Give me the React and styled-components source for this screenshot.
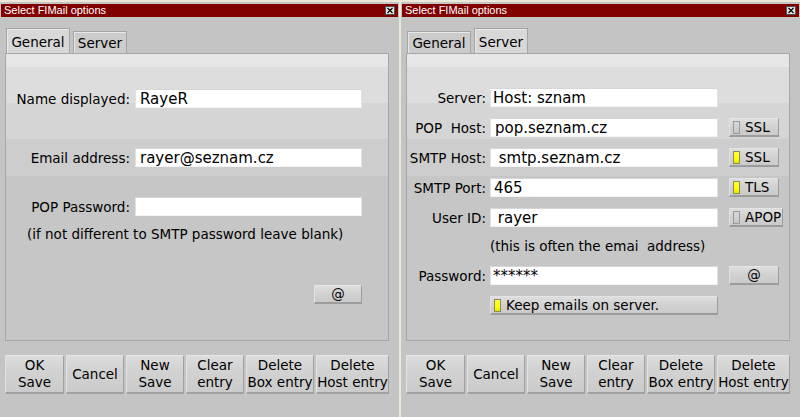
import React from "react";
import styled, { createGlobalStyle } from "styled-components";

const GlobalStyle = createGlobalStyle`
  html, body {
    margin: 0;
    padding: 0;
  }
  body {
    background: #ece9d8;
    font-family: "DejaVu Sans", Verdana, sans-serif;
    font-size: 13.5px;
    color: #000;
  }
`;

const Screen = styled.div`
  display: flex;
  gap: 2px;
  width: 800px;
  height: 417px;
  overflow: hidden;
`;

const Window = styled.div`
  box-sizing: border-box;
  width: ${p => p.width}px;
  height: 415px;
  margin-top: 2px;
  padding: 2px 1px 0;
  background: #c4c4c4;
  display: flex;
  flex-direction: column;
`;

const TitleBar = styled.div`
  height: 13px;
  background: #800000;
  display: flex;
  align-items: center;
  justify-content: space-between;
  padding: 0 3px;
`;

const TitleText = styled.span`
  font-family: "Liberation Sans", Arial, sans-serif;
  font-size: 11px;
  color: #fff;
  line-height: 13px;
`;

const CloseBox = styled.svg`
  display: block;
  flex: none;
`;

const Body = styled.div`
  padding: 11px 0 0 4px;
  display: flex;
  flex-direction: column;
`;

const TabRow = styled.div`
  display: flex;
  align-items: flex-end;
  gap: 3px;
  height: 25px;
  padding-left: 1px;
`;

const Tab = styled.div`
  box-sizing: border-box;
  width: ${p => p.width}px;
  height: ${p => (p.active ? 25 : 22)}px;
  border: 1px solid #a4a4a4;
  border-bottom: none;
  background: ${p => (p.active ? "#d8d8d8" : "#cbcbcb")};
  box-shadow: inset 1px 1px 0 #e8e8e8;
  display: flex;
  align-items: center;
  justify-content: center;
  padding-top: ${p => (p.active ? 2 : 0)}px;
`;

const Panel = styled.div`
  box-sizing: border-box;
  width: 384px;
  height: 288px;
  border: 1px solid #a6a6a6;
  background: linear-gradient(
    to bottom,
    #e6e6e6 0 13px,
    #dddddd 13px 49px,
    #d5d5d5 49px 85px,
    #cdcdcd 85px 122px,
    #c6c6c6 122px
  );
  display: flex;
  flex-direction: column;
`;

const Form = styled.div`
  display: flex;
  flex-direction: column;
  gap: ${p => p.gap || 0}px;
  padding-top: ${p => p.top || 0}px;
`;

const Field = styled.div`
  display: flex;
  align-items: center;
  height: 19px;
  margin-top: ${p => p.top || 0}px;
  padding-left: ${p => p.indent || 0}px;
`;

const Label = styled.span`
  flex: none;
  width: ${p => p.width}px;
  margin-right: ${p => p.gap}px;
  text-align: right;
  white-space: pre;
`;

const TextBox = styled.div`
  box-sizing: border-box;
  flex: none;
  width: ${p => p.width}px;
  height: 19px;
  background: #fff;
  border-top: 1px solid #d6d6d6;
  border-left: 1px solid #e2e2e2;
  border-right: 1px solid #e2e2e2;
  border-bottom: 1px solid #f4f4f4;
  padding-left: ${p => p.indent}px;
  font-size: 15px;
  line-height: 18px;
  white-space: pre;
  overflow: hidden;
`;

const Note = styled.div`
  height: 17px;
  line-height: 17px;
  margin-top: ${p => p.top || 0}px;
  padding-left: ${p => p.indent}px;
  white-space: pre;
`;

const SmallButton = styled.div`
  box-sizing: border-box;
  flex: none;
  width: ${p => p.width}px;
  height: 19px;
  margin-left: ${p => p.left || 0}px;
  border-top: 1px solid #e4e4e4;
  border-left: 1px solid #e0e0e0;
  border-right: 1px solid #9c9c9c;
  border-bottom: 2px solid #9c9c9c;
  background: linear-gradient(to bottom, #dedede, #d2d2d2 45%, #cacaca);
  display: flex;
  align-items: center;
  justify-content: ${p => (p.center ? "center" : "flex-start")};
  padding-left: ${p => (p.center ? 0 : 3)}px;
  line-height: 16px;
  white-space: nowrap;
`;

const Lamp = styled.span`
  box-sizing: border-box;
  flex: none;
  width: 7px;
  height: 13px;
  margin-right: 5px;
  border: 1px solid ${p => (p.on ? "#8a8a5a" : "#9a9a9a")};
  background: ${p =>
    p.on
      ? "linear-gradient(to bottom, #ffff40, #ffff00 60%, #e4e400)"
      : "linear-gradient(to bottom, #d8d8d8, #c6c6c6)"};
`;

const ButtonBar = styled.div`
  display: flex;
  gap: 2px;
  margin-top: 14px;
`;

const BarButton = styled.div`
  box-sizing: border-box;
  width: ${p => p.width}px;
  height: 39px;
  border-top: 1px solid #e6e6e6;
  border-left: 1px solid #e2e2e2;
  border-right: 1px solid #a0a0a0;
  border-bottom: 2px solid #a0a0a0;
  background: linear-gradient(to bottom, #dcdcdc, #d2d2d2 40%, #cbcbcb);
  display: flex;
  align-items: center;
  justify-content: center;
  text-align: center;
  line-height: 17px;
  white-space: pre-line;
`;

const barButtons = [
  { text: "OK\nSave", width: 59 },
  { text: "Cancel", width: 58 },
  { text: "New\nSave", width: 58 },
  { text: "Clear\nentry", width: 58 },
  { text: "Delete\nBox entry", width: 68 },
  { text: "Delete\nHost entry", width: 73 }
];

const Close = () => (
  <CloseBox width="10" height="9" viewBox="0 0 10 9">
    <rect x="0.5" y="0.5" width="9" height="8" fill="#e4e4e4" stroke="#505050" />
    <path d="M2.5 2 L7.5 7 M7.5 2 L2.5 7" stroke="#000" strokeWidth="1.2" />
  </CloseBox>
);

const Shell = ({ width, active, children }) => (
  <Window width={width}>
    <TitleBar>
      <TitleText>Select FIMail options</TitleText>
      <Close />
    </TitleBar>
    <Body>
      <TabRow>
        <Tab width={64} active={active === "general"}>General</Tab>
        <Tab width={54} active={active === "server"}>Server</Tab>
      </TabRow>
      <Panel>{children}</Panel>
      <ButtonBar>
        {barButtons.map(b => (
          <BarButton key={b.text} width={b.width}>
            {b.text}
          </BarButton>
        ))}
      </ButtonBar>
    </Body>
  </Window>
);

const GeneralPage = () => (
  <Shell width={399} active="general">
    <Form>
      <Field top={35}>
        <Label width={124} gap={5}>Name displayed:</Label>
        <TextBox width={227} indent={4}>RayeR</TextBox>
      </Field>
      <Field top={40}>
        <Label width={124} gap={5}>Email address:</Label>
        <TextBox width={227} indent={4}>rayer@seznam.cz</TextBox>
      </Field>
      <Field top={30}>
        <Label width={124} gap={5}>POP Password:</Label>
        <TextBox width={227} indent={4} />
      </Field>
      <Note top={10} indent={21}>
        (if not different to SMTP password leave blank)
      </Note>
      <Field top={42} indent={308}>
        <SmallButton width={48} center>@</SmallButton>
      </Field>
    </Form>
  </Shell>
);

const serverRows = [
  { label: "Server:", value: "Host: sznam", indent: 2 },
  { label: "POP  Host:", value: "pop.seznam.cz", indent: 4, toggle: "SSL", on: false },
  { label: "SMTP Host:", value: " smtp.seznam.cz", indent: 3, toggle: "SSL", on: true },
  { label: "SMTP Port:", value: "465", indent: 3, toggle: "TLS", on: true },
  { label: "User ID:", value: " rayer", indent: 2, toggle: "APOP", on: false, wide: true }
];

const ServerPage = () => (
  <Shell width={399} active="server">
    <Form top={34} gap={11}>
      {serverRows.map(r => (
        <Field key={r.label}>
          <Label width={79} gap={4}>{r.label}</Label>
          <TextBox width={228} indent={r.indent}>{r.value}</TextBox>
          {r.toggle && (
            <SmallButton width={r.wide ? 54 : 50} left={11}>
              <Lamp on={r.on} />
              {r.toggle}
            </SmallButton>
          )}
        </Field>
      ))}
      <Note indent={83}>(this is often the emai  address)</Note>
      <Field>
        <Label width={79} gap={4}>Password:</Label>
        <TextBox width={228} indent={2}>******</TextBox>
        <SmallButton width={50} left={11} center>@</SmallButton>
      </Field>
      <Field indent={83}>
        <SmallButton width={228}>
          <Lamp on />
          Keep emails on server.
        </SmallButton>
      </Field>
    </Form>
  </Shell>
);

export default function App() {
  return (
    <>
      <GlobalStyle />
      <Screen>
        <GeneralPage />
        <ServerPage />
      </Screen>
    </>
  );
}
